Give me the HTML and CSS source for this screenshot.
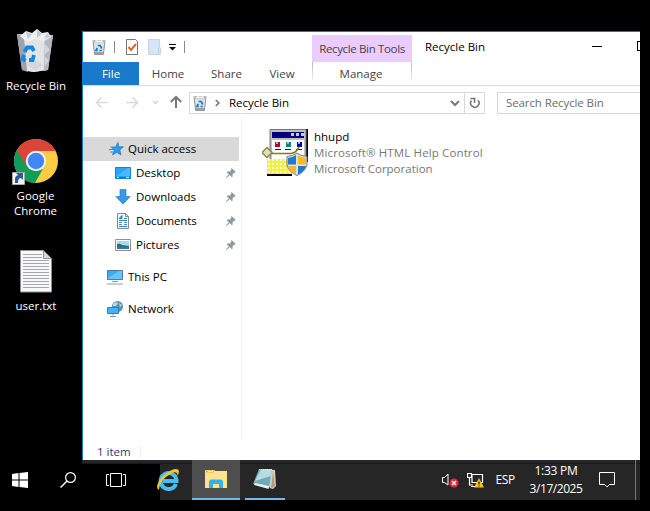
FILE: index.html
```html
<!DOCTYPE html>
<html lang="en">
<head>
<meta charset="utf-8">
<title>Recycle Bin</title>
<link rel="stylesheet" href="styles.css">
</head>
<body>
<svg class="defs" width="0" height="0">
  <symbol id="bin" viewBox="0 0 14 16">
    <path d="M1 1.500h12l-1.600 14H2.600z" fill="#dfe3e5" stroke="#8b9195"/>
    <path d="M1 1h12v2.500H1z" fill="#b4b9bb"/><path d="M3 2l2-1 2 1 3-1 1 2H3z" fill="#f5f6f7"/>
    <path d="M2.500 13h9l-.3 2.500H2.800z" fill="#9aa0a4"/>
    <path d="M5.600 6.500h2.600l1.600 3M9.800 11.500H7.500M5.800 11.500H4L5.300 8.800" fill="none" stroke="#1979ca" stroke-width="1.700"/>
  </symbol>
  <symbol id="pin" viewBox="0 0 10 10">
    <path d="M5.500 0L10 4.300l-1.200.5-.5-.2-1.800 1.800.2 2.100-.9.700L3.700 7.100.6 10 0 9.500l2.800-3.200L.7 4.200l.8-.8 2.200.1 1.700-1.700-.3-.8z" fill="#8d9aa3"/>
  </symbol>
</svg>
<div class="screen">
  <div class="workspace">
    <div class="desktop">
      <div class="shortcut">
        <svg width="40" height="44" viewBox="0 0 40 44">
          <path d="M1 5L37 6 32 41 18 43 6 41z" fill="#c9cdd1"/>
          <path d="M1 5l7 2 4 36-6-2z" fill="#9da2ac"/>
          <path d="M8 8l20-1 1 34-11 2-7-1z" fill="#e1e4e7"/>
          <path d="M29 8l8-2-5 35-4 1z" fill="#b4b8be"/>
          <path d="M4 7l6-5 6 2 5-4 5 4 6-1 3 5-7 4-9-2-8 3z" fill="#eef0f2"/>
          <path d="M10 3l6 2-4 5zM21 1l5 4-5 4zM31 4l3 4-6 2z" fill="#c4c8cc"/>
          <path d="M28 14l6 7-5 4zM29 28l4 3-4 6zM10 35l8-5 9 6-8 5z" fill="#d3d6da"/>
          <path d="M8.500 23l2.500-4.500h5l2 3.500M18 26l-1.500 5H13M9.500 32l-3-2 1.500-4" fill="none" stroke="#1687dc" stroke-width="3.800"/>
        </svg>
        <span class="name bin-name">Recycle Bin</span>
      </div>
      <div class="shortcut chrome">
        <svg width="48" height="48" viewBox="0 0 48 48">
          <circle cx="24" cy="24" r="22" fill="#fccd42"/>
          <path d="M24 24L4.900 13A22 22 0 0 0 23 46l10-18z" fill="#0f9d58"/>
          <path d="M24 14h19.700A22 22 0 0 0 5 12.900l9 16z" fill="#db4437"/>
          <circle cx="24" cy="24" r="10.200" fill="#f3f3f3"/><circle cx="24" cy="24" r="8.200" fill="#4285f4"/>
          <path d="M.5 35.500h12v12H.5z" fill="#f4f4f4" stroke="#aaa"/>
          <path d="M3 46v-4q0-3 3-4l-2-2h7v7l-2-2q-3 0-3 5z" fill="#285b99"/>
        </svg>
        <span class="name chrome-name">Google<br>Chrome</span>
      </div>
      <div class="shortcut textfile">
        <svg width="32" height="43" viewBox="0 0 32 43">
          <path d="M.5.500H23.500L31.500 9v33H.5z" fill="#f8f8f9" stroke="#8e9093"/>
          <path d="M23.500.5V8.500h8z" fill="#d4d6d8" stroke="#8e9093"/>
          <path d="M3 4.500h19M3 7.500h19M3 10.500h26M3 13.500h26M3 16.500h26M3 19.500h26M3 22.500h26M3 25.500h26M3 28.500h26M3 31.500h26M3 34.500h26M3 37.500h26" stroke="#a6a8b0"/>
        </svg>
        <span class="name txt-name">user.txt</span>
      </div>
    </div>

    <div class="window">
      <header class="titlebar">
        <div class="quickbar">
          <svg width="14" height="16"><use href="#bin"/></svg>
          <i class="rule first"></i>
          <svg class="props" width="12" height="16" viewBox="0 0 12 16"><path d="M.5.500h9l2 2v13H.5z" fill="#fff" stroke="#777"/><path d="M2.500 8l2.500 3 5-6" fill="none" stroke="#e5602a" stroke-width="2"/></svg>
          <svg class="folder" width="13" height="16" viewBox="0 0 13 16"><path d="M.5.500h11V8l1 1v6.500H.5z" fill="#d8e5f6" stroke="#c2d4ee"/><path d="M10.500 15V8.500" stroke="#b8cce8"/></svg>
          <svg class="more" width="7" height="8" viewBox="0 0 7 8"><path d="M0 1.500h7" stroke="#111"/><path d="M0 4h7L3.500 7.500z" fill="#111"/></svg>
          <i class="rule"></i>
        </div>
        <div class="context-title"><span>Recycle Bin Tools</span></div>
        <div class="caption"><span>Recycle Bin</span></div>
        <i class="minimize"></i><i class="maximize"></i>
      </header>
      <nav class="tabs">
        <span class="tab file">File</span>
        <span class="tab home">Home</span>
        <span class="tab share">Share</span>
        <span class="tab view">View</span>
        <span class="tab manage">Manage</span>
      </nav>
      <div class="address-row">
        <svg class="arrows" width="100" height="20" viewBox="0 0 100 20" fill="none">
          <path d="M14 10.500h11M18.500 5.500l-5 5 5 5M43 10.500h11M49.500 5.500l5 5-5 5" stroke="#dadada" stroke-width="1.600"/>
          <path d="M70 9l2.500 2.500L75 9" stroke="#d2d2d2" stroke-width="1.400"/>
          <path d="M93 16V5M87.800 10L93 4.800 98.200 10" stroke="#777" stroke-width="2"/>
        </svg>
        <div class="address">
          <svg width="14" height="16"><use href="#bin"/></svg>
          <svg class="crumb" width="5" height="8" viewBox="0 0 5 8"><path d="M.8 1l3 3-3 3" fill="none" stroke="#777" stroke-width="1.700"/></svg>
          <span class="path">Recycle Bin</span>
          <svg class="drop" width="10" height="7" viewBox="0 0 10 7"><path d="M1 1l4 4 4-4" fill="none" stroke="#777" stroke-width="2"/></svg>
          <div class="refresh"><svg width="12" height="12" viewBox="0 0 12 12"><path d="M2.500 3.500A4.200 4.200 0 1 0 9 3.300M5.500 6V1.500M1.500 1.500h5" fill="none" stroke="#777" stroke-width="1.600"/></svg></div>
        </div>
        <div class="search"><span>Search Recycle Bin</span></div>
      </div>
      <div class="body">
        <aside class="sidebar">
          <div class="item root selected">
            <svg width="16" height="14" viewBox="0 0 16 14"><path d="M10 .5l.9 4.300h4.600l-3.600 2.900 1 5.300-4-2.700L4.500 13l1.700-4.600L3.800 5.500l3.700-.6z" fill="#2b9bec" stroke="#1979ca" stroke-width=".7"/><path d="M2.500 5h3M1 7.500h4M2 10h3" stroke="#3c91d4"/></svg>
            <span>Quick access</span></div>
          <div class="item">
            <svg width="16" height="12" viewBox="0 0 16 12"><path d="M.5.500h15v11H.5z" fill="#26a5fa" stroke="#1682d2"/><path d="M1 9L13 1h2v8z" fill="#4bb8ff"/><path d="M1 10.500h14" stroke="#1272b8"/><path d="M2 10.500h2M11 10.500h3" stroke="#d8efff"/></svg>
            <span>Desktop</span><svg class="pin" width="10" height="10"><use href="#pin"/></svg></div>
          <div class="item">
            <svg width="16" height="16" viewBox="0 0 16 16"><path d="M5 .5h6v7h4.200L8 15.200.8 7.500H5z" fill="#3a96e6" stroke="#2a83d2" stroke-width=".7"/></svg>
            <span>Downloads</span><svg class="pin" width="10" height="10"><use href="#pin"/></svg></div>
          <div class="item">
            <svg width="16" height="16" viewBox="0 0 16 16"><path d="M2.500.5h8l3 3v12h-11z" fill="#fff" stroke="#87898b"/><path d="M10.500.5v3h3" fill="none" stroke="#87898b"/><path d="M4 5.500l3-3v3zM9 5.500h3M4 7.500h8M4 13.500h8" stroke="#2587c8" fill="#2587c8"/><path d="M4 9.500h3M4 11.500h3M9 9.500h3M9 11.500h3" stroke="#4a91bd"/></svg>
            <span class="documents">Documents</span><svg class="pin" width="10" height="10"><use href="#pin"/></svg></div>
          <div class="item">
            <svg width="16" height="12" viewBox="0 0 16 12"><path d="M.5.500h15v11H.5z" fill="#fff" stroke="#8e9294"/><path d="M2 2h12v8H2z" fill="#a7d8f5"/><path d="M2 5q3-1 5 1l7 1v3H2z" fill="#346c68"/><path d="M2 8h12v2H2z" fill="#2778bf"/></svg>
            <span>Pictures</span><svg class="pin" width="10" height="10"><use href="#pin"/></svg></div>
          <div class="item root spaced">
            <svg width="16" height="16" viewBox="0 0 16 16"><path d="M.5 1.500h15v9H.5z" fill="#39adf4" stroke="#527c98"/><path d="M1 9L12 2h3v8H1z" fill="#65c5fc"/><path d="M5 12.500h6M0 15h16" stroke="#8aa0ae"/></svg>
            <span>This PC</span></div>
          <div class="item root spaced">
            <svg width="16" height="16" viewBox="0 0 16 16"><circle cx="10.500" cy="5.500" r="5.500" fill="#5794b3"/><path d="M6 3q3-3 5-1L9 5H6zM12 2l3 2-2 2z" fill="#b9dce9"/><path d="M.5 6.500h11v6H.5z" fill="#42b5fa" stroke="#3680b2"/><path d="M6 13v1.500M3 15.500h6" stroke="#7896a9"/></svg>
            <span>Network</span></div>
        </aside>
        <main class="files">
          <svg class="app-icon" width="48" height="49" viewBox="0 0 48 49">
            <path d="M44 0h2v33h-2z"/><path d="M5 45h25v2H5z"/>
            <path d="M8 .5h36v33H8z" fill="#c0c0c0" stroke="#777"/>
            <path d="M10 3h32v6H10z" fill="#000080"/><path d="M29 4h3v3h-3zM34 4h3v3h-3zM39 4h3v3h-3z" fill="#ccc"/>
            <path d="M10 11h32v21H10z" fill="#fff"/>
            <path d="M13 13h5v5h-5z" fill="#c00020"/><path d="M24 13h5v5h-5z" fill="#008888"/><path d="M35 13h5v5h-5z" fill="#0000b8"/>
            <path d="M14 13h2v2h-2zM25 13h2v2h-2zM36 13h2v2h-2z" fill="#aaf"/>
            <path d="M13 20.500h6M23 20.500h6M34 20.500h6" stroke="#222"/>
            <path d="M5 30h25v15H5z" fill="#f0f04a"/>
            <path d="M7 30v15M11 30v15M15 30v15M19 30v15M23 30v15M27 30v15" stroke="#fffbc0" stroke-dasharray="2 2" stroke-width="2"/>
            <path d="M10 24.500h19q6-1 8-7" fill="none" stroke="#808000" stroke-width="1.600"/>
            <path d="M0 23.500l5-5 5 5-5 5z" fill="#e0e0c4" stroke="#888846" stroke-width="1.500"/>
            <path d="M35 24q4 3 10 3.500v8.500q-2 7-10 10.500-8-3.500-10-10.500v-8.500q6-.5 10-3.500z" fill="#d9e1e8" stroke="#757e87"/>
            <path d="M34 26v9.500h-8V29q4 0 8-3zM36 37h8q-1 5-8 8.500z" fill="#2278cc"/>
            <path d="M36 26q4 3 8 3v6.500h-8zM26 37h8v8.500q-7-3.500-8-8.500z" fill="#fdb924"/>
          </svg>
          <div class="file-info"><span class="f-name">hhupd</span><span class="f-desc">Microsoft® HTML Help Control</span><span>Microsoft Corporation</span></div>
        </main>
      </div>
      <footer class="status"><span>1 item</span></footer>
    </div>
  </div>

  <div class="taskbar">
    <div class="task plain"><svg width="16" height="16" viewBox="0 0 16 16"><path d="M0 2l6.500-.9v6.400H0zM7.500 1L16 0v7.500H7.500zM0 8.500h6.500v6.400L0 14zM7.500 8.500H16V16l-8.500-1z" fill="#fff"/></svg></div>
    <div class="task plain"><svg width="16" height="16" viewBox="0 0 16 16"><circle cx="10.500" cy="5.500" r="4.900" fill="none" stroke="#fff" stroke-width="1.200"/><path d="M7 9l-6.500 6.500" stroke="#fff" stroke-width="1.400"/></svg></div>
    <div class="task plain"><svg width="20" height="14" viewBox="0 0 20 14"><path d="M4.500.5h11v13h-11zM3 1.500H.5v11H3M17 1.500h2.500v11H17" fill="none" stroke="#fff"/></svg></div>
    <div class="task ie"><svg width="24" height="24" viewBox="0 0 24 24">
      <path d="M20 16A8 8 0 1 1 20.500 12v1H7" fill="none" stroke="#45bdf0" stroke-width="4"/>
      <path d="M3 22Q-2 19 6 9 17-1 22 1.500q2 1.500-.5 6.500Q21.500 2.500 16 5 3 12 3 22z" fill="#f8c42c"/></svg></div>
    <div class="task active"><svg width="22" height="18" viewBox="0 0 22 18"><path d="M0 1q0-1 1-1h8l1.500 1H22v17H0z" fill="#ffe28d"/><path d="M1 .5h8v2H1z" fill="#e7b32c"/><path d="M3 1h5v1H3z" fill="#fff4c0"/><path d="M4 18v-7l2-1.500h10l2 1.500v7h-4v-4H8v4z" fill="#35b1e6"/></svg></div>
    <div class="task running"><svg width="24" height="22" viewBox="0 0 24 22"><path d="M6 1l16 1 1 16-3 3-3-1z" fill="#d4cfc5"/><path d="M20 3l2 15-4 3z" fill="#b59a7f"/><path d="M6 1h13l-3 19L0 16z" fill="#71a9b9"/><path d="M8 1h11l-1 7L2 13z" fill="#b5dce3"/><path d="M2 15l14 3-.3 3L1 17z" fill="#e5eeee"/><path d="M6 1.500h14" stroke="#eee" stroke-dasharray="1 1"/></svg></div>
    <div class="tray">
      <svg class="volume" width="17" height="15" viewBox="0 0 17 15"><path d="M.5 4.500h2l3.500-3.500v11L2.500 9.500h-2z" fill="none" stroke="#fff"/><circle cx="12" cy="10" r="4.500" fill="#e12b3a"/><path d="M10 8l4 4M14 8l-4 4" stroke="#fff" stroke-width="1.300"/></svg>
      <svg class="net" width="17" height="15" viewBox="0 0 17 15"><path d="M5 1.500h10.500v8H5zM.5.500h4v4h-4zM2.500 5v7H6M4 13.500h6" fill="none" stroke="#fff" stroke-width="1.200"/><path d="M12 5l5 9.500H7z" fill="#fcc516"/><path d="M12 8.500v3M12 12.500v1" stroke="#332b00" stroke-width="1.400"/></svg>
      <span class="lang">ESP</span>
      <div class="clock"><span class="time">1:33 PM</span><span class="date">3/17/2025</span></div>
      <svg class="notice" width="16" height="16" viewBox="0 0 16 16"><path d="M.5.500h15v12H10.500L8 15 5.500 12.500H.5z" fill="none" stroke="#fff"/></svg>
      <i class="peek"></i>
    </div>
  </div>
</div>
</body>
</html>
```

FILE: styles.css
```css
* { box-sizing: border-box; }
body {
  margin: 0;
  background: #000;
  color: #000;
  font: 11.5px/16px "Open Sans", "Noto Sans", sans-serif;
  overflow: hidden;
}
svg { display: block; flex: none; }
span { white-space: nowrap; }
.defs { position: absolute; }
.screen { width: 640px; height: 511px; overflow: hidden; }
.workspace { display: flex; height: 460px; }

/* desktop shortcuts */
.desktop { width: 82px; padding: 29px 10px 0 0; color: #fff; }
.shortcut { display: flex; flex-direction: column; align-items: center; height: 108px; }
.shortcut .name { margin-top: 5px; text-align: center; line-height: 15px; }
.shortcut.chrome { height: 113px; padding-right: 1px; }
.shortcut.chrome .name { margin-top: 3px; }

/* explorer window */
.window {
  flex: 1;
  min-width: 0;
  margin-top: 31px;
  display: flex;
  flex-direction: column;
  background: #fff;
  border-left: 1px solid #1979ca;
  border-top: 1px solid #1979ca;
}
.titlebar { display: flex; height: 30px; }
.quickbar { display: flex; align-items: center; width: 229px; padding-left: 9px; }
.rule { width: 1px; height: 12px; background: #8a8a8a; margin-left: 8px; }
.props { margin-left: 11px; }
.folder { margin-left: 10px; }
.more { margin-left: 8px; }
.context-title {
  width: 100px;
  height: 27px;
  margin-top: 3px;
  padding-top: 6px;
  background: #eaccff;
  color: #444;
  text-align: center;
  letter-spacing: -0.35px;
}
.caption { width: 172px; padding: 7px 0 0 13px; }
.minimize { width: 10px; height: 1px; margin: 14px 35px 0 8px; background: #000; flex: none; }
.maximize { width: 10px; height: 10px; margin: 9px -10px 0 0; border: 1px solid #000; flex: none; }
.tabs { display: flex; height: 24px; border-bottom: 1px solid #dadbdc; color: #444; }
.tab { height: 23px; line-height: 24px; text-align: center; }
.tab.file { width: 56px; background: #1979ca; color: #fff; }
.tab.home { width: 58px; }
.tab.share { width: 59px; }
.tab.view { width: 56px; padding-right: 4px; }
.tab.manage {
  width: 100px;
  height: 18px;
  padding-right: 2px;
  background:
    linear-gradient(#bbb, #eee) left / 1px 100% no-repeat,
    linear-gradient(#bbb, #eee) right / 1px 100% no-repeat;
}
.address-row { display: flex; align-items: flex-start; height: 32px; padding-top: 6px; overflow: hidden; }
.arrows { margin-right: 6px; }
.address { display: flex; align-items: center; flex: none; width: 296px; height: 22px; border: 1px solid #d9d9d9; padding-left: 3px; }
.crumb { margin-left: 8px; }
.path { margin-left: 9px; }
.drop { margin: 1px 4px 0 auto; }
.refresh { display: grid; place-items: center; width: 20px; height: 20px; border-left: 1px solid #d9d9d9; }
.search { width: 170px; flex: none; height: 22px; margin-left: 12px; padding: 2px 8px; border: 1px solid #d9d9d9; color: #6d6d6d; letter-spacing: -0.1px; }
.body { display: flex; height: 322px; }
.sidebar { width: 159px; padding-top: 19px; border-right: 1px solid #f3f3f3; }
.item { display: flex; align-items: center; width: 156px; height: 24px; padding: 0 3px 0 32px; }
.item span { margin-left: 5px; }
.item .documents { letter-spacing: -0.1px; }
.item.root { padding-left: 24px; }
.item.root svg { margin: 0 -1px 0 1px; }
.item.root.spaced svg { margin: 0; }
.item.selected { background: #d9d9d9; }
.item.spaced { margin-top: 8px; }
.item .pin { margin-left: auto; }
.files { display: flex; padding: 11px 0 0 20px; }
.file-info { display: flex; flex-direction: column; margin-left: 4px; color: #777; }
.f-name { color: #000; }
.f-desc { letter-spacing: 0.13px; }
.status { display: flex; align-items: center; height: 20px; padding: 4px 0 0 14px; color: #2c3a78; }
.status span { width: 44px; border-right: 1px solid #eee; line-height: 12px; }

/* taskbar */
.taskbar {
  display: flex;
  height: 40px;
  background:
    linear-gradient(#0b1a24, #0b1a24) 82px 3px / 100% 1px no-repeat,
    linear-gradient(#262626, #262626) 82px 0 / 78px 3px no-repeat,
    linear-gradient(90deg, #000 160px, #262626 160px);
}
.task { display: grid; place-items: center; width: 48px; }
.task.plain:first-child { width: 44px; padding-right: 4px; }
.task.ie { width: 52px; padding-left: 4px; }
.task.active { background: #4e4e4e; border-bottom: 2px solid #76b9ed; }
.task.running { width: 40px; margin-left: 5px; border-bottom: 2px solid #76b9ed; }
.tray { display: flex; align-items: center; margin-left: auto; color: #fff; font-size: 12px; }
.volume { margin-top: 1px; }
.net { margin-left: 8px; }
.lang { margin-left: 11px; letter-spacing: -0.3px; }
.clock { display: flex; flex-direction: column; align-items: center; width: 60px; margin-left: 11px; line-height: 18px; letter-spacing: -0.45px; }
.time { letter-spacing: -0.25px; }
.notice { margin-left: 13px; }
.peek { width: 5px; height: 40px; margin-left: 20px; border-left: 1px solid #777; }
```
